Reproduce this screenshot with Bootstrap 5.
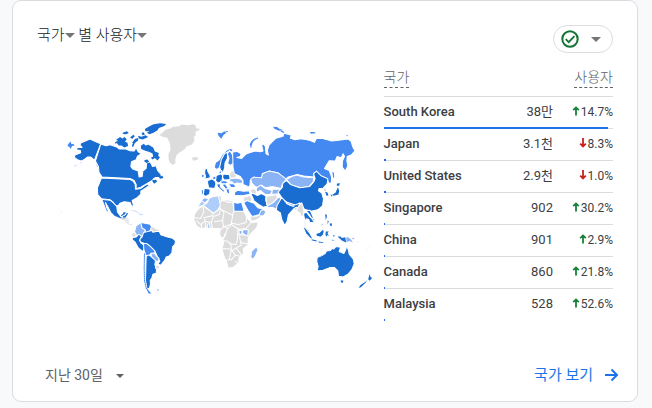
<!DOCTYPE html>
<html lang="ko">
<head>
<meta charset="utf-8">
<meta name="viewport" content="width=device-width, initial-scale=1">
<title>국가별 사용자</title>
<link href="https://cdn.jsdelivr.net/npm/bootstrap@5.3.0/dist/css/bootstrap.min.css" rel="stylesheet">
<style>
body{background:#f8f9fb;font-family:Roboto,"Noto Sans CJK KR",sans-serif;font-size:14px;line-height:20px;color:#3c4043}
.report{margin:0 14px 6px 12px;border:1px solid #dadce0;border-radius:9px;padding:24px 24px 16px}
.plain{border:0;background:none;padding:0;color:inherit;font-weight:inherit}
.title-line{font-size:15px;color:#202124;font-weight:300;padding-top:1px}
.caret{display:inline-block;border:5px solid transparent;border-top-color:#757575;border-bottom:0;vertical-align:2px}
.caret-sm{border-width:4px;border-bottom:0;border-top-color:#5f6368}
.pill{height:28px;width:60px;border:1px solid #dadce0;border-radius:14px;padding:0 11px 0 6px;background:#fff}
.map-side{width:60%;padding:62px 4px 0 21px}
.table-side{width:40%;padding:14px 0 0 1px}
.users{font-size:13px;line-height:16px;color:#3c4043}
.users th,.users td{padding:0;height:32px;vertical-align:middle;border-bottom:1px solid #dadce0}
.users thead th{height:29px;font-size:14px;font-weight:300;color:#5f6368;vertical-align:top}
.users tbody th{font-weight:500}
.users tbody tr{position:relative}
.users tbody tr:last-child>*{border-color:transparent}
.term{display:inline-block;line-height:20px;border-bottom:1px dashed #5f6368}
.users .change{font-size:12px;width:60px;padding-bottom:1px}
.change svg{vertical-align:0;margin-right:1px}
.meter-bar{position:absolute;left:0;bottom:-1px;height:2px;background:#1a73e8}
.foot{margin-top:44px;margin-right:-8px;color:#5f6368}
.foot a{font-size:15px;color:#1a73e8}
.foot .caret{margin-left:13px}
.land{stroke:#fff;stroke-width:3;stroke-linejoin:round}
.c-dark{fill:#196dd1}.c-mid{fill:#4489f2}.c-soft{fill:#8ab4f6}.c-pale{fill:#aecdfa}.c-none{fill:#dcdcdc}
.tiny{stroke:none}
</style>
</head>
<body>
<main class="report bg-white">
  <header class="d-flex justify-content-between align-items-start">
    <h1 class="title-line mb-0"><button type="button" class="plain">국가<span class="caret"></span></button> <button type="button" class="plain">별 사용자<span class="caret"></span></button></h1>
    <button type="button" class="pill d-flex align-items-center justify-content-between" aria-label="데이터 품질">
      <svg width="20" height="20" viewBox="0 0 20 20" fill="none" stroke="#137333" stroke-width="2"><circle cx="10" cy="10" r="7.7"/><path d="M5.8 10.2l2.900 2.900 5.800-6" stroke-width="1.8"/></svg>
      <span class="caret"></span>
    </button>
  </header>

  <div class="d-flex">
    <div class="map-side">
      <svg class="d-block w-100" viewBox="0 0 960 570" role="img" aria-label="국가별 사용자 지도">
        <!-- North America -->
        <g class="land" transform="translate(-24)">
          <g class="c-dark">
            <path d="M92 84L106 78 120 72 134 79 152 86 133 135 122 126 112 126 104 132 94 138 84 135 72 126 76 119 92 113 91 106 79 104 82 97 96 97 90 90Z"/>
            <path d="M152 87L168 92 180 89 200 96 208 102 225 101 240 107 252 108 258 98 264 110 274 116 262 123 258 134 244 140 242 154 248 162 264 168 267 186 276 184 278 168 288 160 289 144 300 140 307 154 318 152 322 166 332 177 334 187 316 187 308 193 325 196 316 204 306 196 290 206 272 216 258 221 258 208 252 196 240 190 156 186 147 172 145 154 136 138Z"/>
            <path d="M154 189L240 193 249 198 255 207 256 222 272 220 290 207 298 210 286 219 272 228 272 237 260 248 246 256 251 274 244 272 240 262 222 260 210 264 204 272 196 272 188 260 180 254 154 251 143 238 142 218 148 204Z"/>
            <path d="M155 252L164 254 180 255 190 263 200 274 202 290 212 304 222 300 230 291 236 294 230 304 225 312 212 311 194 304 182 292 174 276 166 262 170 278 178 294 169 288 162 270Z"/>
          </g>
          <g class="c-dark tiny">
            <path d="M198 74l12-8 6 4 8-4 6 8-6 5 8 4 2 10-12 4-8-6-8 0-6-7-6 2 2-6 8-2zM218 53l12-4 6 5-8 4-10-1zM240 67l10-8 4 5-8 8zM254 72l10-3 0 7-8 6-5 6-5-5zM246 88l8-4-4 10-4 2zM264 62l10 3 12-4 8 5-16 7-12-3z"/>
            <path d="M272 92l9-6 5 5 9-2 14 8 5 12 12 5-2 7 5 6-7 9-8-7-7 4-5-5 7-4-2-9-11-5-9-2-14-6z"/>
            <path d="M284 42l14-8 12-6 20-3 18 2-6 6-16 6-4 7-12 7-12 5-8-5 8-4-12 0zM274 54l7-2 3 7-7 2zM283 135l9-2 5 7-7 4-7-4zM326 187l10-6 4 8-10 2zM305 196l12-2 3 6-8 6z"/>
          </g>
          <g class="c-mid tiny"><path d="M56 85l6-6 2 8 6 0 4 4-8 2-4 9-4-6-6-4z"/><path d="M72 153l8-5 2 2-10 5zM88 144l8-4-4 5zM139 147l5 7-2 4-4-9z" opacity=".35"/></g>
          <g class="c-none tiny"><path d="M24 282l3-2 2 3zM31 288l5 3-3 3z" opacity=".6"/></g>
        </g>
        <!-- South and Central America -->
        <g class="land" transform="translate(186 225)">
          <path class="c-none tiny" d="M2 82l14-1 8 2 3 12-2 5 13 3-3 3-13-4-8-10-11-4z" opacity=".65"/>
          <path class="c-dark" d="M0 75l6-4 4-6 9 0-3 8-8 4-2 5z"/>
          <path class="c-pale tiny" d="M30 61l12-1 16 7-6 1-10-5zM56 70l14 2-4 3-12-2z" opacity=".7"/>
          <path class="c-none" d="M35 129l11-3 5 7-10 9-6-3zM92 108l9 3 6 4 11 4-2 8-12-1-9 3-4-10z"/>
          <path class="c-soft" d="M44 111l9-8 11-6 1 14 10 6-2 16-5 12-9-8-10-2-6-11 4-12z"/>
          <path class="c-mid" d="M62 98l4 0 12 2 12 2 4 8-5 12-11 6-4-10-8-4z"/>
          <path class="c-dark" d="M70 127l9-2 16-4 3 5 10-2 9-1 5 11 18 6 17 4 9 8-2 10-7 8-2 18-8 9-9 3-5 11-12 14-8-4 6-8-7-13-7-16-10-10-8-9-16-6-10-4-3-7 8-8z"/>
          <path class="c-dark" d="M37 143l12-3 6-8 9 5-6 13 4 8 8 6 2 10-3 10-14-10-10-18-9-8z"/>
          <path class="c-mid" d="M70 160l10 0 12 10 12 12 0 8-12 0-5 7-10-2-6-17z"/>
          <path class="c-soft" d="M92 189l10-1 7 9 8 8-4 9-8-2-11-12z"/>
          <path class="c-dark" d="M78 198l8-4 7 5 13 12-2 12 5 14-1 12-10 3-3 11-5 8 1 10-4 14-7-1-4-24 1-34z"/>
          <path class="c-none" d="M107 224l10 3 1 8-8 2-4-4z"/>
          <path d="M73 190l-1 45 1 35 5 23 9 15" fill="none" stroke="#4489f2" stroke-width="3" stroke-dasharray="5 1"/>
          <path class="c-mid tiny" d="M80 292l6 9 8 9-9-1zM110 299l8-2-5 4z"/>
        </g>
        <!-- Greenland and Europe -->
        <g class="land" transform="translate(276)">
          <path class="c-none tiny" d="M28 60L38 52 46 44 62 40 66 36 86 34 94 29 116 31 126 28 136 31 137 40 151 42 136 50 136 62 130 66 133 76 125 88 108 94 104 102 88 112 79 120 75 133 76 142 69 150 60 144 55 132 55 116 61 104 59 84 51 68 38 66Z"/>
          <path class="c-none tiny" d="M124 129l9-3 11 2-2 6-12 3z"/>
          <path class="c-mid tiny" d="M202 53l12 2 8-6 6 5-8 5-7 12-8-8zM224 48l10 0-4 4z"/>
          <path d="M302 98q-2-14 7-22l14-8" fill="none" stroke="#6ba1f4" stroke-width="4"/>
          <path class="c-mid" d="M193 151l3-9 11-8 9-16 12-12 12-6 9 4-4 6-12 0-11 8-8 16-5 22-9 7-7-4z"/>
          <path class="c-dark" d="M213 171l-5-15 5-22 10-19 9-3-1 18-7 14-1 14-4 13z"/>
          <path class="c-mid" d="M231 116l7-10 8 12 7 24-13 9-8-6 4-15z"/>
          <path class="c-dark" d="M164 163l7-4 2 11 6 10 1 8-17 4 3-8-3-10z"/>
          <path class="c-mid" d="M154 179l7-2 1 8-8 4z"/>
          <path class="c-dark" d="M171 198l13-7 10 6 3 9-4 14-18-2zM197 182l13-6 7 5-2 18-12 5-7-7zM218 177l20 2 2 14-17 2-6-6zM162 219l18 3-2 15-12 7-7-5zM198 208l11-3 1 10 14 13-4 4-17-16z"/>
          <path class="c-mid" d="M153 224l7-1-1 16-5-2zM188 186l9-4-1 12-10-2zM207 168l8-1-2 8-7 1zM211 198l12-2 12 5-8 5-14 0zM215 208l10-2 8 12-6 5zM234 206l18-1 4 12-14 0zM226 222l10-2 3 18-8-4z"/>
          <path class="c-none" d="M240 170l12-5 7 14-3 10-16 0-2-10z"/>
          <path class="c-soft" d="M238 192l16-3 14 2 11 5-5 9-15-1-8 3-6-7-7 0z"/>
          <path class="c-mid" d="M252 232l10-7 18 3 17-1 2 10-22 5-24-2z"/>
          <path class="c-none" d="M298 224l14-4 8 8-4 10-12-4zM276 246l20-8 10 16-18 5zM214 252l32 5 1 32-40-9z"/>
        </g>
        <!-- Africa and Middle East -->
        <g class="land" transform="translate(381 150)">
          <path class="c-none" d="M27 148L40 130 54 122 84 144 104 130 102 108 116 106 128 112 142 110 146 138 176 138 184 156 198 172 219 170 214 188 194 208 188 220 189 238 174 250 174 266 162 278 160 292 144 306 129 309 124 290 116 274 110 250 115 232 103 208 104 190 84 190 66 186 48 191 34 182 26 164Z"/>
          <path fill="none" d="M28 158L46 160 56 140 52 122M56 158L60 168 46 178 34 166M56 158L80 152 86 142M60 168L78 172 84 154 102 148 106 130M78 172L82 192M86 170L112 166 116 142 104 130M110 134L142 150 146 136M142 150L138 176 114 186 112 164M138 174L160 178 182 172 184 156M48 176L50 192M60 172L62 190M114 186L104 196M114 182L128 190 138 178 160 192 182 190 198 172M126 190L118 216 106 218M120 204L112 226 128 228 134 236 152 238 156 224 158 190M158 208L190 210M162 212L166 232 188 236M112 250L138 252 136 232M138 252L132 282 122 286M138 258L152 248 168 240 166 228M152 248L168 268 160 282M140 254L150 270 138 284 132 282M150 270L162 272M150 288L156 292"/>
          <path class="c-pale" d="M54 121L66 112 66 102 82 95 101 92 105 122 96 136 84 144Z"/>
          <path class="c-pale" d="M27 144L36 126 52 102 70 98 69 107 54 120 38 126Z"/>
          <path class="c-soft" d="M48 106L56 98 71 101 60 113Z"/>
          <path class="c-none" d="M99 91l7-1 4 14-6 8zM194 150l18 3 14-6 4 7-18 11-15 3zM174 96l22-5 5 12-7 8-20-3z"/>
          <path class="c-mid" d="M145 111L156 114 168 111 172 122 176 138 146 138Z"/>
          <path class="c-mid" d="M175 113L184 106 206 114 218 128 236 134 230 146 212 151 200 154 188 136Z"/>
          <path class="c-soft" d="M226 137l8-4 8 6-6 12-12 2-2-6z"/>
          <path class="c-dark" d="M196 84L206 86 216 91 228 85 242 93 241 106 248 122 234 126 220 118 206 107Z"/>
          <path class="c-none" d="M242 93L258 92 272 88 276 98 266 110 254 120 244 119Z"/>
          <path class="c-soft" d="M246 122L264 112 277 98 286 96 288 110 276 125 273 132 262 127 246 126Z"/>
          <path class="c-soft" d="M173 193l16 1-2 18-10-4-6-6zM161 196l9 0 0 9-8 4z"/>
          <path class="c-soft" d="M67 177l6-1 1 13-6 1z"/>
          <path class="c-soft" d="M213 244L218 254 210 272 203 282 196 276 199 258Z"/>
        </g>
        <!-- Asia -->
        <g class="land" transform="translate(576)">
          <path class="c-mid" d="M-53 111L-40 109 -28 116 -30 124 -41 127 -26 130 -14 118 0 112 14 108 30 110 38 108 34 92 39 86 45 94 47 116 54 120 51 106 56 90 66 80 76 70 98 64 100 55 122 60 120 70 134 74 152 71 178 76 192 82 198 70 214 70 244 78 270 75 294 72 302 80 306 94 313 107 302 120 290 124 289 138 292 152 284 168 275 156 276 138 282 124 278 116 272 128 260 124 254 138 236 137 222 160 236 166 243 184 243 202 236 206 230 192 208 184 198 170 190 174 190 186 160 183 140 178 112 186 106 194 84 174 56 168 36 176 34 188 8 188 0 196 -2 216 -22 208 -22 196 -30 184 -48 176 -52 156Z"/>
          <path class="c-mid" d="M243 162l9 12 1 20-7-8z"/>
          <path class="c-mid tiny" d="M68 35l12 1 8 6 10 3-12 2-14-6zM92 46l10 5-3 3-9-5zM178 51l14 0 4 4-14 1zM287 60l7 2-5 2zM4 77q8-10 20-8l-14 5-8 20-4-6z"/>
          <path class="c-soft" d="M1 192L10 186 34 188 36 176 56 168 84 174 108 192 96 206 92 220 66 214 46 218 34 210 26 218 14 214 5 205Z"/>
          <path class="c-soft" d="M18 219L30 210 44 220 66 226 60 238 44 238 30 226 18 232ZM66 222L96 222 84 236 64 238Z"/>
          <path class="c-soft" d="M108 193L124 184 138 180 160 186 190 188 188 200 176 214 152 218 122 210Z"/>
          <path class="c-dark" d="M83 231L96 216 97 205 108 196 120 208 148 218 178 214 190 200 194 190 189 176 198 168 212 182 232 191 230 206 218 219 206 220 204 227 214 234 219 252 216 272 202 284 182 288 162 282 150 264 132 272 112 264 96 250Z"/>
          <path class="c-dark tiny" d="M224 230l7 2 3 9-6 1zM259 206l9-2-2 8-7 0zM262 216l4 10-2 12-14 4-5-3 10-6zM240 238l6 2-3 5z"/>
          <path class="c-none tiny" d="M220 220l8 2-2 7-6-3z"/>
        </g>
        <!-- South and Southeast Asia, Oceania -->
        <g class="land" transform="translate(636 225)">
          <path class="c-dark" d="M20 46L34 22 44 34 60 46 78 43 88 38 84 52 70 56 54 74 50 94 43 106 34 88 30 68 18 60Z"/>
          <path class="c-none" d="M83 50L94 38 100 56 100 72 94 84 88 68 78 62Z"/>
          <path class="c-soft" d="M50 36l22 8-3 5-21-9zM74 52l6-1-1 8-6 1z"/>
          <path class="c-dark" d="M99 70l9-4 12 16 11 4-1 10-12 2-3-10-8-2-3 14 3 14 8 6 3 8-10-8-5-14 0-16zM107 62l12-2 6 14 8 18-6-2-10-16z"/>
          <path class="c-dark" d="M96 106l10 8 12 15 9 16-6 1-15-16zM136 130l10-3 13-12 2 10-3 10-7 6-13-3z"/>
          <path class="c-dark tiny" d="M124 147l15 4-1 3-15-4zM144 154l14 2 0 2-14-1zM166 124l9 0-4 4 4 10-5-4-3 6-2-8zM164 72l5 2 0 10-4-3zM172 90l4 6-5 0zM177 101l7-2 0 9-5-2zM188 134l5 2-3 5zM201 139l9 0 4 4 10-2 3 16-13-6-5-5z"/>
          <path class="c-soft tiny" d="M227 140l10 3 6 7 4 7-10-5-9 4zM244 145l8-3-4 6zM163 82l6 1-4 7zM170 93l3 9-4-3zM160 100l-8 7 2-5zM183 147l10 4-8 1z"/>
          <path class="c-pale tiny" d="M284 173l9 8-4-2zM296 165l2 5-3-1zM326 190l4-2-1 4zM256 150l8 6-2 1z" opacity=".5"/>
          <path class="c-dark" d="M140 202L154 196 164 190 168 182 180 181 184 175 190 176 196 169 210 171 206 184 220 190 226 178 228 165 234 181 236 192 248 206 251 220 244 238 232 252 218 260 204 258 202 242 192 232 178 232 158 240 140 242 143 228 139 214Z"/>
          <path class="c-dark tiny" d="M211 270l8 1-3 7-5-2zM297 251l3 9 5 3-8 8-4-4 2-8zM290 269l-5 8-14 14-7 1 7-9 13-8z"/>
        </g>
      </svg>
    </div>

    <div class="table-side">
      <table class="users w-100">
        <thead><tr><th scope="col"><span class="term">국가</span></th><th scope="col" colspan="2" class="text-end"><span class="term">사용자</span></th></tr></thead>
        <tbody>
          <tr><th scope="row">South Korea<span class="meter-bar" style="width:98%"></span></th><td class="text-end">38만</td><td class="change text-end"><svg width="8" height="10" viewBox="0 0 8 10"><path d="M4 9.5V2M1.200 4.200L4 1.400l2.800 2.800" fill="none" stroke="#188038" stroke-width="1.8"/></svg>14.7%</td></tr>
          <tr><th scope="row">Japan<span class="meter-bar" style="width:1%"></span></th><td class="text-end">3.1천</td><td class="change text-end"><svg width="8" height="10" viewBox="0 0 8 10"><path d="M4 0v8M1.200 5.600L4 8.400l2.800-2.800" fill="none" stroke="#c5221f" stroke-width="1.8"/></svg>8.3%</td></tr>
          <tr><th scope="row">United States<span class="meter-bar" style="width:1%"></span></th><td class="text-end">2.9천</td><td class="change text-end"><svg width="8" height="10" viewBox="0 0 8 10"><path d="M4 0v8M1.200 5.600L4 8.400l2.800-2.800" fill="none" stroke="#c5221f" stroke-width="1.8"/></svg>1.0%</td></tr>
          <tr><th scope="row">Singapore<span class="meter-bar" style="width:.5%"></span></th><td class="text-end">902</td><td class="change text-end"><svg width="8" height="10" viewBox="0 0 8 10"><path d="M4 9.5V2M1.200 4.200L4 1.400l2.800 2.800" fill="none" stroke="#188038" stroke-width="1.8"/></svg>30.2%</td></tr>
          <tr><th scope="row">China<span class="meter-bar" style="width:.5%"></span></th><td class="text-end">901</td><td class="change text-end"><svg width="8" height="10" viewBox="0 0 8 10"><path d="M4 9.5V2M1.200 4.200L4 1.400l2.800 2.800" fill="none" stroke="#188038" stroke-width="1.8"/></svg>2.9%</td></tr>
          <tr><th scope="row">Canada<span class="meter-bar" style="width:.5%"></span></th><td class="text-end">860</td><td class="change text-end"><svg width="8" height="10" viewBox="0 0 8 10"><path d="M4 9.5V2M1.200 4.200L4 1.400l2.800 2.800" fill="none" stroke="#188038" stroke-width="1.8"/></svg>21.8%</td></tr>
          <tr><th scope="row">Malaysia<span class="meter-bar" style="width:.5%"></span></th><td class="text-end">528</td><td class="change text-end"><svg width="8" height="10" viewBox="0 0 8 10"><path d="M4 9.5V2M1.200 4.200L4 1.400l2.800 2.800" fill="none" stroke="#188038" stroke-width="1.8"/></svg>52.6%</td></tr>
        </tbody>
      </table>
    </div>
  </div>

  <footer class="foot d-flex justify-content-between align-items-center">
    <button type="button" class="plain ps-2">지난 30일<span class="caret caret-sm"></span></button>
    <a href="#" class="d-flex align-items-center text-decoration-none">국가 보기<svg class="ms-2" width="20" height="20" viewBox="0 0 20 20" fill="none" stroke="#1a73e8" stroke-width="2"><path d="M4 10h12M10.500 4.500L16 10l-5.500 5.500"/></svg></a>
  </footer>
</main>
<script src="https://cdn.jsdelivr.net/npm/bootstrap@5.3.0/dist/js/bootstrap.bundle.min.js"></script>
</body>
</html>
